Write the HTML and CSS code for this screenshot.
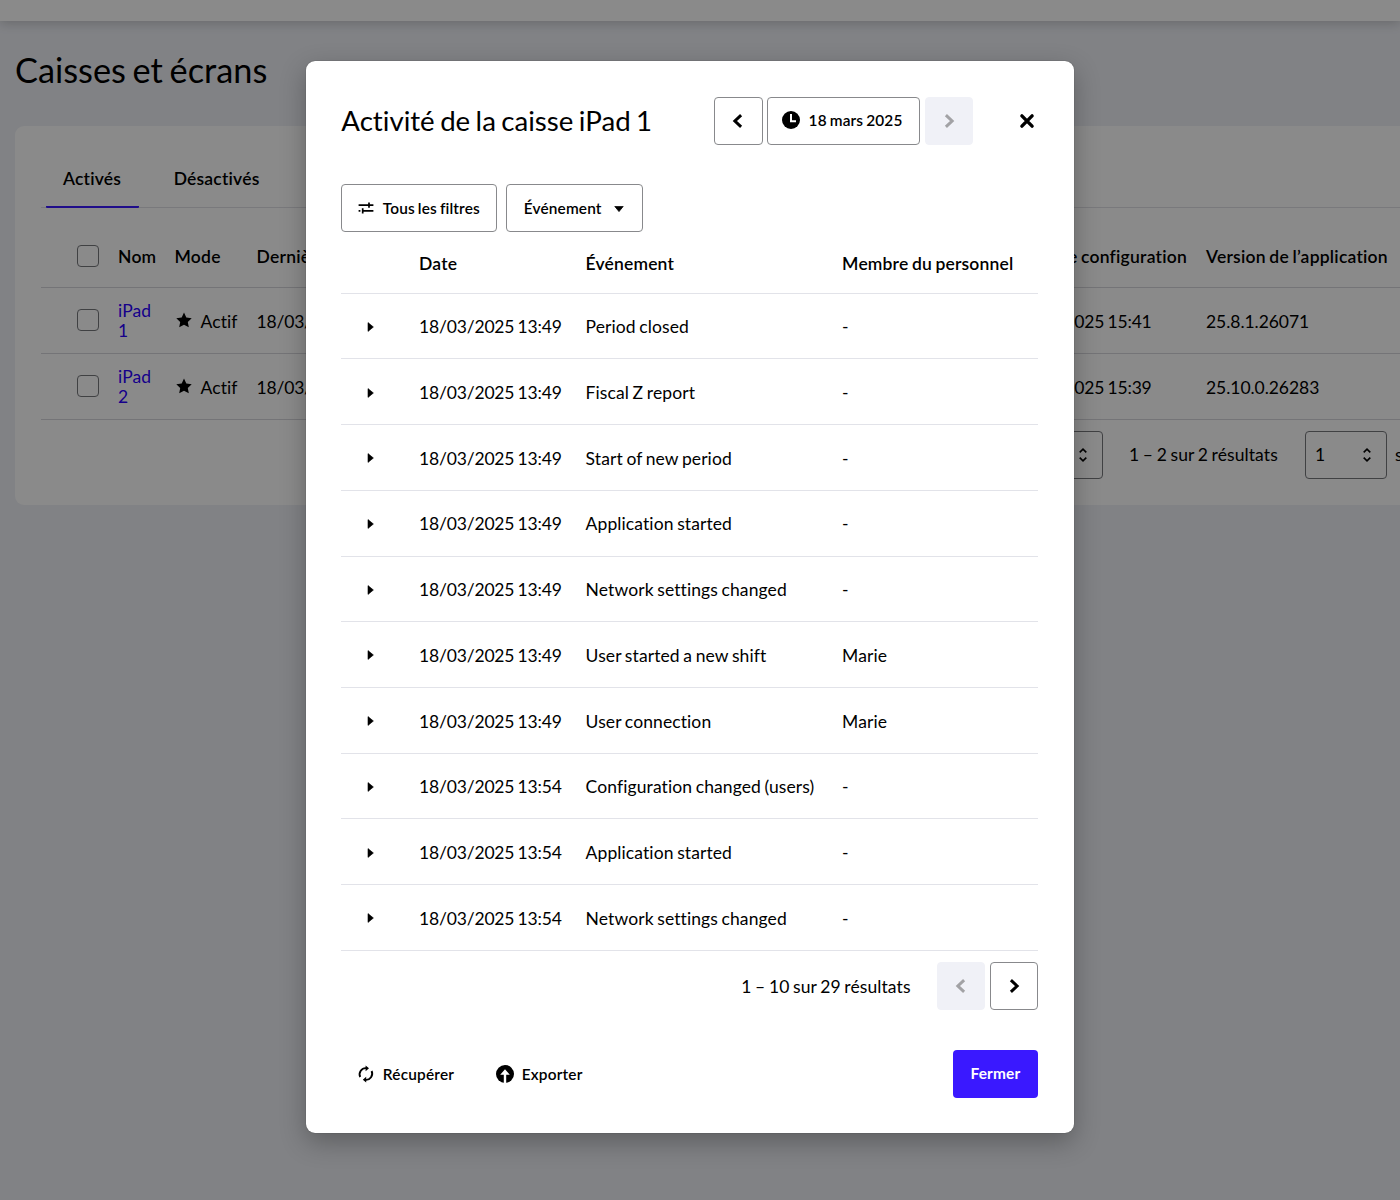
FILE: index.html
```html
<!DOCTYPE html>
<html lang="fr">
<head>
<meta charset="utf-8">
<title>Caisses et écrans</title>
<link rel="stylesheet" href="styles.css">
</head>
<body>
<svg class="sprite" aria-hidden="true">
  <symbol id="left" viewBox="0 0 20 20"><path d="M13.1 4.2 6.9 10l6.2 5.8" fill="none" stroke="currentColor" stroke-width="3"/></symbol>
  <symbol id="right" viewBox="0 0 20 20"><path d="M6.9 4.2 13.1 10l-6.2 5.8" fill="none" stroke="currentColor" stroke-width="3"/></symbol>
  <symbol id="star" viewBox="0 0 16 16"><path d="m8 .6 2.3 4.9 5.4.7-3.9 3.7 1 5.4L8 12.7l-4.8 2.6 1-5.4L.3 6.2l5.4-.7z"/></symbol>
  <symbol id="sort" viewBox="0 0 10 16"><path d="M1.7 5.4 5 2.2l3.3 3.2M1.7 10.6 5 13.8l3.3-3.2" fill="none" stroke="currentColor" stroke-width="1.6"/></symbol>
  <symbol id="tri" viewBox="0 0 8 12"><path d="M1 1.6v8.8L6.4 6z" stroke="currentColor" stroke-width=".6"/></symbol>
</svg>

<div class="page">
  <header class="topbar"></header>
  <h1 class="page-title">Caisses et écrans</h1>
  <section class="card">
    <nav class="tabs">
      <a class="tab tab-active">Activés</a>
      <a class="tab">Désactivés</a>
    </nav>
    <div class="devices">
      <div class="device device-head">
        <span class="check"></span><span>Nom</span><span>Mode</span><span>Dernière activité</span><span class="head-config">Date de configuration</span><span>Version de l’application</span>
      </div>
      <div class="device">
        <span class="check"></span><a class="link">iPad 1</a><span class="mode"><svg class="star"><use href="#star"/></svg>Actif</span><span class="date">18/03/2025 13:54</span><span class="date">18/03/2025 15:41</span><span class="version">25.8.1.26071</span>
      </div>
      <div class="device">
        <span class="check"></span><a class="link">iPad 2</a><span class="mode"><svg class="star"><use href="#star"/></svg>Actif</span><span class="date">18/03/2025 13:52</span><span class="date">18/03/2025 15:39</span><span class="version">25.10.0.26283</span>
      </div>
    </div>
    <div class="card-pager">
      <span class="select">10<svg class="sort"><use href="#sort"/></svg></span>
      <span class="card-count">1 – 2 sur 2 résultats</span>
      <span class="select">1<svg class="sort"><use href="#sort"/></svg></span>
      <span class="card-total">sur 1</span>
    </div>
  </section>
</div>

<div class="overlay">
  <section class="modal">
    <header class="modal-head">
      <h2 class="modal-title">Activité de la caisse iPad 1</h2>
      <div class="date-nav">
        <button class="btn btn-square"><svg class="ico20"><use href="#left"/></svg></button>
        <button class="btn btn-date"><svg class="ico18" viewBox="0 0 18 18"><circle cx="9" cy="9" r="9"/><path d="M9 3v7.2h5" fill="none" stroke="#fff" stroke-width="2"/></svg>18 mars 2025</button>
        <button class="btn btn-square btn-off"><svg class="ico20"><use href="#right"/></svg></button>
      </div>
      <button class="close"><svg class="ico20" viewBox="0 0 20 20"><path d="m4.9 4.9 10.2 10.2M15.1 4.9 4.9 15.1" stroke="currentColor" stroke-width="3.4" stroke-linecap="round"/></svg></button>
    </header>

    <div class="filters">
      <button class="btn btn-all"><svg class="ico16" viewBox="0 0 16 14"><path d="M.6 4.2h10.2M11 1.6v5.2M11 4.2h4.4M.6 9.8h1.8M4.7 7.2v5.2M4.7 9.8h10.7" fill="none" stroke="currentColor" stroke-width="1.7"/></svg>Tous les filtres</button>
      <button class="btn btn-event">Événement<svg class="caret" viewBox="0 0 10 6"><path d="M.8.4h8.4L5 5.6z" stroke="currentColor" stroke-width=".8" stroke-linejoin="round"/></svg></button>
    </div>

    <div class="log">
      <div class="row row-head"><span></span><span>Date</span><span>Événement</span><span>Membre du personnel</span></div>
      <div class="row"><svg class="tri"><use href="#tri"/></svg><span class="date">18/03/2025 13:49</span><span>Period closed</span><span>-</span></div>
      <div class="row"><svg class="tri"><use href="#tri"/></svg><span class="date">18/03/2025 13:49</span><span>Fiscal Z report</span><span>-</span></div>
      <div class="row"><svg class="tri"><use href="#tri"/></svg><span class="date">18/03/2025 13:49</span><span>Start of new period</span><span>-</span></div>
      <div class="row"><svg class="tri"><use href="#tri"/></svg><span class="date">18/03/2025 13:49</span><span>Application started</span><span>-</span></div>
      <div class="row"><svg class="tri"><use href="#tri"/></svg><span class="date">18/03/2025 13:49</span><span>Network settings changed</span><span>-</span></div>
      <div class="row"><svg class="tri"><use href="#tri"/></svg><span class="date">18/03/2025 13:49</span><span>User started a new shift</span><span>Marie</span></div>
      <div class="row"><svg class="tri"><use href="#tri"/></svg><span class="date">18/03/2025 13:49</span><span>User connection</span><span>Marie</span></div>
      <div class="row"><svg class="tri"><use href="#tri"/></svg><span class="date">18/03/2025 13:54</span><span>Configuration changed (users)</span><span>-</span></div>
      <div class="row"><svg class="tri"><use href="#tri"/></svg><span class="date">18/03/2025 13:54</span><span>Application started</span><span>-</span></div>
      <div class="row"><svg class="tri"><use href="#tri"/></svg><span class="date">18/03/2025 13:54</span><span>Network settings changed</span><span>-</span></div>
    </div>

    <div class="pager">
      <span class="pager-count">1 – 10 sur 29 résultats</span>
      <button class="btn btn-square btn-off"><svg class="ico20"><use href="#left"/></svg></button>
      <button class="btn btn-square"><svg class="ico20"><use href="#right"/></svg></button>
    </div>

    <footer class="actions">
      <button class="plain"><svg class="ico18" viewBox="0 0 18 18"><path d="M3.2 12A6.2 6.2 0 0 1 9.4 3.2M14.6 6A6.2 6.2 0 0 1 8.4 14.8" fill="none" stroke="currentColor" stroke-width="1.9"/><path d="M8.6.4v5.8L12 3.2zM9.2 11.8v5.8L5.8 14.8z"/></svg>Récupérer</button>
      <button class="plain plain-export"><svg class="ico18" viewBox="0 0 18 18"><circle cx="9" cy="9" r="9"/><path d="M7.8 18V9.8H4.2L9 4.2l4.8 5.6h-3.6V18z" fill="#fff"/></svg>Exporter</button>
      <button class="primary">Fermer</button>
    </footer>
  </section>
</div>
</body>
</html>
```

FILE: styles.css
```css
* { box-sizing: border-box; }

body {
  margin: 0;
  height: 1200px;
  overflow: hidden;
  background: #eef0f6;
  color: #000;
  font: 17.5px/21px Lato, "Liberation Sans", sans-serif;
  font-variant-ligatures: none;
  letter-spacing: .1px;
  word-spacing: -1px;
}

h1, h2 { margin: 0; font-weight: 400; letter-spacing: 0; word-spacing: -.06em; }

button {
  margin: 0;
  padding: 0;
  border: 0;
  background: none;
  color: #000;
  font: 600 15.4px/20px Lato, "Liberation Sans", sans-serif;
  font-variant-ligatures: none;
  letter-spacing: .15px;
  word-spacing: -1px;
}

svg { display: block; flex: none; fill: currentColor; }

.sprite { display: none; }

/* Page behind the dialog */
.page { height: 1200px; overflow: hidden; }

.topbar {
  height: 21px;
  background: #fff;
  box-shadow: 0 2px 12px rgba(0, 0, 0, .2);
}

.page-title {
  padding: 28px 0 0 15px;
  font-size: 34.3px;
  line-height: 42px;
}

.card {
  width: 1500px;
  height: 379px;
  margin: 35px 0 0 15px;
  padding: 26px 26px 0;
  border-radius: 9px;
  background: #fff;
}

.tabs {
  display: flex;
  gap: 17.5px;
  height: 56px;
  padding-left: 4.5px;
  border-bottom: 1px solid #dfe0e6;
}

.tab {
  height: 55.5px;
  padding: 16px 17.5px 0;
  border-bottom: 2px solid transparent;
  font-weight: 600;
  letter-spacing: .2px;
}

.tab-active { border-bottom-color: #3a18ff; border-radius: 1px; }

.device {
  display: grid;
  grid-template-columns: 77px 56.5px 82px 752.5px 197px 300px;
  align-items: center;
  height: 65.75px;
  border-bottom: 1px solid #d6d7dc;
}

.device > span:not(.check), .device > .link { padding-top: 2px; }
.device-head { height: 80px; font-weight: 600; letter-spacing: .23px; }
.device.device-head > span:not(.check) { padding-top: 17px; }
.device-head .check { margin-top: 17px; }

.check {
  width: 22px;
  height: 22px;
  margin-left: 36px;
  border: 1px solid #77787c;
  border-radius: 4px;
}

.date { letter-spacing: -.18px; }
.version { letter-spacing: -.05px; }
.head-config { padding-right: 19px; text-align: right; white-space: nowrap; }
.link { width: 38px; color: #2a00ff; line-height: 20.5px; }
.mode { display: flex; align-items: center; gap: 9px; padding-left: 1px; }
.star { width: 16px; height: 16px; margin-top: -2px; }

.card-pager {
  display: flex;
  align-items: center;
  padding: 11px 0 0 980px;
}

.select {
  display: flex;
  align-items: center;
  justify-content: space-between;
  width: 82px;
  height: 48px;
  padding: 0 14px 0 9px;
  border: 1px solid #77787c;
  border-radius: 4px;
}

.sort { width: 10px; height: 16px; }
.card-count { width: 202px; padding-left: 26px; }
.card-total { padding-left: 8px; }

/* Dialog */
.overlay {
  position: absolute;
  inset: 0;
  display: flex;
  justify-content: center;
  align-items: flex-start;
  padding: 61px 20.5px 0 0;
  background: rgba(0, 0, 0, .46);
}

.modal {
  width: 767.5px;
  height: 1072px;
  padding: 35.5px 35.3px 0;
  border-radius: 9px;
  background: #fff;
  box-shadow: 0 0 1px rgba(0, 0, 0, .5), 0 9px 26px rgba(0, 0, 0, .28);
}

.modal-head { display: flex; align-items: center; height: 48px; }
.modal-title { width: 373px; padding-top: 1px; font-size: 27.65px; line-height: 36px; }
.date-nav { display: flex; gap: 4.5px; }

.btn {
  display: flex;
  align-items: center;
  height: 48px;
  padding-bottom: 1px;
  border: 1px solid #88898c;
  border-radius: 4px;
  background: #fff;
}

.btn-square { width: 48.3px; justify-content: center; padding-bottom: 0; }
.btn-date { width: 153px; gap: 9px; padding-left: 13.5px; }
.btn-off { border-color: #f0f1f7; background: #f0f1f7; color: #a2a2a5; }
.ico20 { width: 20px; height: 20px; }
.ico18 { width: 18px; height: 18px; }
.ico16 { width: 16px; height: 14px; }
.close { margin-left: 44.5px; }

.filters { display: flex; gap: 9px; margin-top: 39.5px; }
.btn-all { width: 156px; gap: 9px; padding-left: 15.5px; }
.btn-event { width: 137px; gap: 12px; padding-left: 16.5px; }
.caret { width: 10px; height: 6px; margin-top: 2px; }

.row {
  display: grid;
  grid-template-columns: 77.8px 166.5px 256.5px 1fr;
  align-items: center;
  height: 65.73px;
  padding-top: 1.5px;
  border-bottom: 1px solid #e2e3e9;
}

.row-head { height: 61.7px; padding-top: 2px; font-weight: 600; letter-spacing: .17px; }
.tri { width: 8px; height: 12px; margin-left: 25.4px; }

.pager {
  display: flex;
  align-items: center;
  justify-content: flex-end;
  gap: 4.5px;
  padding-top: 11.5px;
}

.pager-count { margin-right: 22px; }

.actions { display: flex; align-items: center; margin-top: 39.5px; }
.plain { display: flex; align-items: center; gap: 8px; padding-left: 15.5px; letter-spacing: .2px; }
.plain-export { margin-left: 26px; }

.primary {
  width: 85.5px;
  height: 48px;
  margin-left: auto;
  padding-bottom: 1px;
  border-radius: 4px;
  background: #3a18ff;
  color: #fff;
  font-weight: 700;
}
```
